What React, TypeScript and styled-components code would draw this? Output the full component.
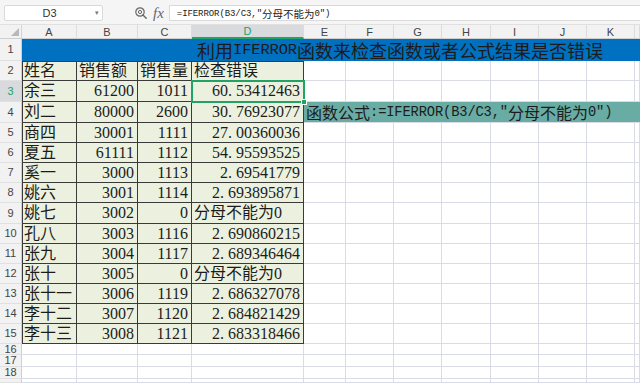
import React from 'react';
import styled, { createGlobalStyle, css } from 'styled-components';

const Global = createGlobalStyle`
  html, body { margin: 0; padding: 0; background: #fff; }
  body {
    width: 640px; height: 383px; overflow: hidden;
    font-family: "Liberation Sans", "Noto Sans CJK SC", sans-serif;
  }
`;

const COLS = [55, 61, 54, 112, 42, 48, 48, 49, 48, 48, 48];
const LETTERS = ['A', 'B', 'C', 'D', 'E', 'F', 'G', 'H', 'I', 'J', 'K'];
const DATA_H = [20, 21, 21, 20, 20, 20, 20, 21, 20, 20, 20, 20, 20, 20];
const ROWS = [14, 22, ...DATA_H, 11, 12, 12, 4];

const GRID = '#d9dce6';
const INK = '#1c1c1c';
const GREEN = '#21a366';
const CELL_FONT = `"Liberation Serif", "Noto Sans CJK SC", serif`;

const Page = styled.div`
  display: flex;
  flex-direction: column;
  width: 640px;
  height: 383px;
  overflow: hidden;
`;

const TopBar = styled.div`
  display: flex;
  align-items: flex-start;
  height: 27px;
  box-sizing: border-box;
  padding: 5px 0 0 4px;
  background: #f5f5f6;
  border-bottom: 1px solid #e0e0e0;
`;

const NameBox = styled.div`
  display: flex;
  align-items: center;
  width: 99px;
  height: 16px;
  box-sizing: border-box;
  background: #fff;
  border: 1px solid #dadada;
  border-radius: 2px;
`;

const NameText = styled.span`
  flex: 1;
  text-align: center;
  font-size: 11px;
  color: #333;
  padding-left: 2px;
`;

const Caret = styled.span`
  width: 10px;
  font-size: 7px;
  color: #777;
  text-align: center;
`;

const Tools = styled.div`
  display: flex;
  align-items: center;
  gap: 6px;
  height: 16px;
  margin-left: 32px;
  margin-right: 5px;
`;

const Fx = styled.span`
  font-family: "Liberation Serif", serif;
  font-style: italic;
  font-size: 15px;
  color: #666;
  line-height: 16px;
`;

const FormulaBox = styled.div`
  flex: 1;
  display: flex;
  align-items: center;
  height: 16px;
  box-sizing: border-box;
  background: #fff;
  border: 1px solid #dadada;
  border-right: none;
  padding-left: 7px;
  font-family: ${CELL_FONT};
  font-size: 10.5px;
  color: #222;
  white-space: nowrap;
`;

const Half = styled.span`
  font-family: "Liberation Mono", monospace;
  font-size: 0.86em;
  letter-spacing: -0.01em;
`;

const Dot = styled.span`
  letter-spacing: 0.25em;
`;

const Sheet = styled.div`
  display: grid;
  grid-template-columns: 22px ${COLS.map((c) => `${c}px`).join(' ')} 1fr;
  grid-template-rows: ${ROWS.map((r) => `${r}px`).join(' ')};
`;

const Corner = styled.div`
  background: #f2f2f2;
  border-right: 1px solid #d4d4d4;
  border-bottom: 1px solid #cfcfcf;
  box-sizing: border-box;
  display: flex;
  align-items: flex-end;
  justify-content: flex-end;
  padding: 0 2px 2px 0;
`;

const ColHead = styled.div<{ $active?: boolean }>`
  display: flex;
  align-items: center;
  justify-content: center;
  box-sizing: border-box;
  font-size: 11px;
  color: #444;
  background: #f2f2f2;
  border-right: 1px solid #dcdcdc;
  border-bottom: 1px solid #cfcfcf;
  ${(p) =>
    p.$active &&
    css`
      background: #d8dadd;
      color: ${GREEN};
      border-bottom: 2px solid ${GREEN};
    `}
`;

const RowHead = styled.div<{ $active?: boolean }>`
  display: flex;
  align-items: center;
  justify-content: center;
  box-sizing: border-box;
  font-size: 11px;
  line-height: 1;
  color: #444;
  background: #f2f2f2;
  border-right: 1px solid #cfcfcf;
  border-bottom: 1px solid #e0e0e0;
  overflow: hidden;
  ${(p) =>
    p.$active &&
    css`
      background: #d8dadd;
      color: ${GREEN};
    `}
`;

const GridCell = styled.div`
  box-sizing: border-box;
  border-right: 1px solid ${GRID};
  border-bottom: 1px solid ${GRID};
`;

const TitleCell = styled.div`
  grid-column: span 12;
  display: flex;
  align-items: center;
  padding-left: 175px;
  background: #0070c0;
  font-family: ${CELL_FONT};
  font-size: 18px;
  color: ${INK};
  white-space: nowrap;
  overflow: hidden;
`;

const NoteCell = styled.div`
  grid-column: span 8;
  display: flex;
  align-items: center;
  box-sizing: border-box;
  padding-left: 2px;
  background: #68aca4;
  border-bottom: 1px solid ${GRID};
  font-family: ${CELL_FONT};
  font-size: 16px;
  color: ${INK};
  white-space: nowrap;
  overflow: hidden;
`;

const DataCell = styled.div<{
  $right?: boolean;
  $first?: boolean;
  $top?: boolean;
  $selected?: boolean;
}>`
  position: relative;
  display: flex;
  align-items: center;
  justify-content: ${(p) => (p.$right ? 'flex-end' : 'flex-start')};
  box-sizing: border-box;
  padding: 0 ${(p) => (p.$right ? '3px' : '0')} 0 ${(p) => (p.$right ? '0' : '2px')};
  background: #ebf1de;
  border-right: 1px solid #3a3a3a;
  border-bottom: 1px solid #3a3a3a;
  box-shadow: ${(p) =>
    [p.$first ? 'inset 1px 0 0 #3a3a3a' : '', p.$top ? 'inset 0 1px 0 #3a3a3a' : '']
      .filter(Boolean)
      .join(', ') || 'none'};
  font-family: ${CELL_FONT};
  font-size: 16px;
  line-height: 1;
  color: ${INK};
  white-space: nowrap;
  ${(p) =>
    p.$selected &&
    css`
      &::after {
        content: '';
        position: absolute;
        left: -1px;
        top: -1px;
        right: -2px;
        bottom: -2px;
        border: 2px solid ${GREEN};
        pointer-events: none;
        z-index: 2;
      }
      &::before {
        content: '';
        position: absolute;
        right: -4px;
        bottom: -4px;
        width: 4px;
        height: 4px;
        background: ${GREEN};
        border: 1px solid #fff;
        z-index: 3;
      }
    `}
`;

type Row = [string, string, string, string];

const HEADER: Row = ['姓名', '销售额', '销售量', '检查错误'];
const DATA: Row[] = [
  ['余三', '61200', '1011', '60.53412463'],
  ['刘二', '80000', '2600', '30.76923077'],
  ['商四', '30001', '1111', '27.00360036'],
  ['夏五', '61111', '1112', '54.95593525'],
  ['奚一', '3000', '1113', '2.69541779'],
  ['姚六', '3001', '1114', '2.693895871'],
  ['姚七', '3002', '0', '分母不能为0'],
  ['孔八', '3003', '1116', '2.690860215'],
  ['张九', '3004', '1117', '2.689346464'],
  ['张十', '3005', '0', '分母不能为0'],
  ['张十一', '3006', '1119', '2.686327078'],
  ['李十二', '3007', '1120', '2.684821429'],
  ['李十三', '3008', '1121', '2.683318466'],
];

const Value = ({ v }: { v: string }) => {
  const [i, f] = v.split('.');
  return (
    <>
      {i}
      <Dot>.</Dot>
      {f}
    </>
  );
};

const Magnifier = () => (
  <svg width="12" height="12" viewBox="0 0 12 12" fill="none">
    <circle cx="5" cy="5" r="4.2" stroke="#666" strokeWidth="1.2" />
    <circle cx="5" cy="5" r="1.6" stroke="#666" strokeWidth="1" />
    <path d="M8 8 L11.2 11.2" stroke="#666" strokeWidth="1.4" strokeLinecap="round" />
  </svg>
);

const CornerMark = () => (
  <svg width="8" height="8" viewBox="0 0 8 8">
    <path d="M8 0 L8 8 L0 8 Z" fill="#b9b9b9" />
  </svg>
);

const emptyCells = (n: number, key: string) =>
  Array.from({ length: n }, (_, i) => <GridCell key={`${key}-${i}`} />);

export default function App() {
  const rows: React.ReactNode[] = [];

  rows.push(
    <Corner key="corner">
      <CornerMark />
    </Corner>,
  );
  LETTERS.forEach((l) =>
    rows.push(
      <ColHead key={`ch-${l}`} $active={l === 'D'}>
        {l}
      </ColHead>,
    ),
  );
  rows.push(<ColHead key="ch-L" />);

  rows.push(<RowHead key="rh-1">1</RowHead>);
  rows.push(
    <TitleCell key="title">
      利用<Half>IFERROR</Half>函数来检查函数或者公式结果是否错误
    </TitleCell>,
  );

  rows.push(<RowHead key="rh-2">2</RowHead>);
  HEADER.forEach((h, i) =>
    rows.push(
      <DataCell key={`h-${i}`} $first={i === 0} $top>
        {h}
      </DataCell>,
    ),
  );
  rows.push(...emptyCells(8, 'e2'));

  DATA.forEach((r, idx) => {
    const n = idx + 3;
    rows.push(
      <RowHead key={`rh-${n}`} $active={n === 3}>
        {n}
      </RowHead>,
    );
    rows.push(
      <DataCell key={`a-${n}`} $first>
        {r[0]}
      </DataCell>,
      <DataCell key={`b-${n}`} $right>
        {r[1]}
      </DataCell>,
      <DataCell key={`c-${n}`} $right>
        {r[2]}
      </DataCell>,
    );
    const isErr = !r[3].includes('.');
    rows.push(
      <DataCell key={`d-${n}`} $right={!isErr} $selected={n === 3}>
        {isErr ? r[3] : <Value v={r[3]} />}
      </DataCell>,
    );
    if (n === 4) {
      rows.push(
        <NoteCell key="note">
          函数公式<Half>:=IFERROR(B3/C3,"</Half>分母不能为<Half>0")</Half>
        </NoteCell>,
      );
    } else {
      rows.push(...emptyCells(8, `e${n}`));
    }
  });

  [16, 17, 18].forEach((n) => {
    rows.push(<RowHead key={`rh-${n}`}>{n}</RowHead>);
    rows.push(...emptyCells(12, `e${n}`));
  });
  rows.push(<RowHead key="rh-19" />);
  rows.push(...emptyCells(12, 'e19'));

  return (
    <>
      <Global />
      <Page>
        <TopBar>
          <NameBox>
            <NameText>D3</NameText>
            <Caret>▾</Caret>
          </NameBox>
          <Tools>
            <Magnifier />
            <Fx>fx</Fx>
          </Tools>
          <FormulaBox>
            <Half>=IFERROR(B3/C3,"</Half>分母不能为<Half>0")</Half>
          </FormulaBox>
        </TopBar>
        <Sheet>{rows}</Sheet>
      </Page>
    </>
  );
}
